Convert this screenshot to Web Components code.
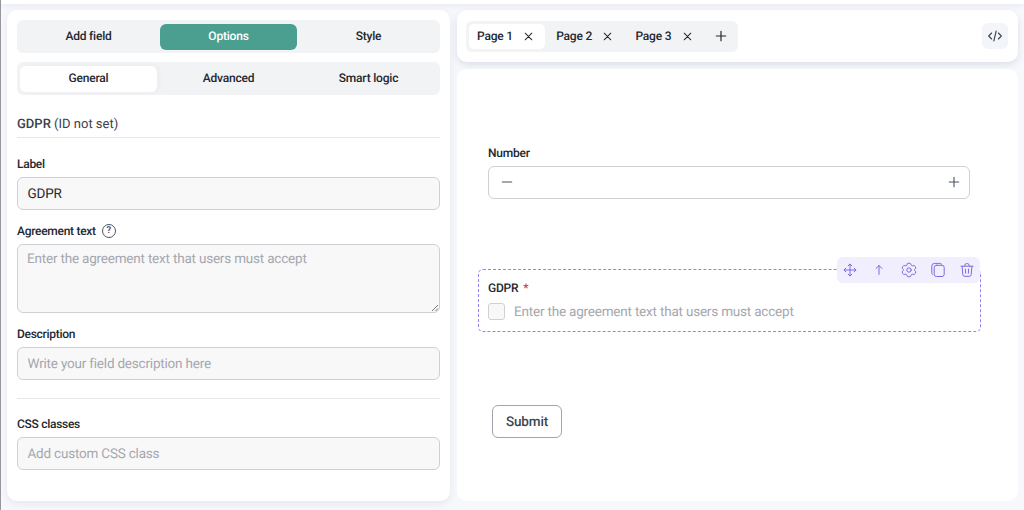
<!DOCTYPE html>
<html lang="en">
<head>
<meta charset="utf-8">
<title>Form builder</title>
<style>
html, body {
    margin:0;
    height:100%;
    overflow:hidden;
}
body {
    font-family:Roboto, sans-serif;
    font-size:12px;
    letter-spacing:-.2px;
    color:#23282f;
    text-rendering:geometricPrecision;
}
</style>
</head>
<body>
<form-builder></form-builder>
<script>
const icons = {
    close: '<path d="M4.5 4.5l7 7M11.5 4.5l-7 7"/>',
    plus: '<path d="M8 3.3v9.4M3.3 8h9.4"/>',
    minus: '<path d="M3.3 8h9.4"/>',
    code: '<path d="M4.6 5L1.7 8l2.9 3M11.4 5l2.9 3-2.9 3M9.2 3L6.8 13"/>',
    move: '<path d="M8 2.2v11.6M2.2 8h11.6M6.2 3.8L8 2l1.8 1.8M6.2 12.2L8 14l1.8-1.8M3.8 6.2L2 8l1.8 1.8M12.2 6.2L14 8l-1.8 1.8"/>',
    up: '<path d="M8 12.4V3.6M5 6.5l3-3 3 3"/>',
    gear: '<circle cx="8" cy="8" r="2.2"/><path d="M6.4 1.6Q8 .5 9.6 1.6L10.3 3.3Q11 3.8 11.4 3.8L13.2 3.5Q14.9 4.5 14.8 6.3L13.6 7.5V8.5L14.8 9.7Q14.9 11.5 13.2 12.5L11.4 12.2Q11 12.2 10.3 12.7L9.6 14.4Q8 15.5 6.4 14.4L5.7 12.7Q5 12.2 4.6 12.2L2.8 12.5Q1.1 11.5 1.2 9.7L2.4 8.5V7.5L1.2 6.3Q1.1 4.5 2.8 3.5L4.6 3.8Q5 3.8 5.7 3.3Z"/>',
    copy: '<rect x="4.2" y="3.3" width="10" height="11.2" rx="2.2"/><path d="M2.3 12.4Q1.8 11.8 1.8 10.8V4.1Q1.8 1.4 4.5 1.4h5.2q1.3 0 2 .9"/>',
    trash: '<path d="M2 4.2h12M5.5 4.1L6.4 2Q6.7 1.6 7.2 1.6h1.6q.5 0 .8.4l.9 2.1M3.1 4.5l.7 8.2q.2 1.6 1.7 1.6h5q1.5 0 1.7-1.6l.7-8.2M6.4 7.2l.2 4M9.6 7.2l-.2 4"/>'
}

class UiIcon extends HTMLElement {
    connectedCallback() {
        const shadow = this.attachShadow({ mode: 'open' })
        shadow.innerHTML = `
        <style>
        :host {
            display:block;
            flex:none;
            width:16px;
            height:16px;
        }
        svg {
            display:block;
            width:100%;
            height:100%;
            fill:none;
            stroke:currentColor;
            stroke-width:var(--stroke, 1.1);
            stroke-linecap:round;
            stroke-linejoin:round;
        }
        </style>
        <svg viewBox="0 0 16 16">${icons[this.getAttribute('name')]}</svg>
        `
    }
}

class SegmentTabs extends HTMLElement {
    connectedCallback() {
        const shadow = this.attachShadow({ mode: 'open' })
        shadow.innerHTML = `
        <style>
        :host {
            display:grid;
            grid-template-columns:repeat(3, 1fr);
            gap:3px;
            box-sizing:border-box;
            height:33px;
            padding:3.5px 3px 3px;
            border-radius:6px;
            background:#f2f3f5;
        }
        ::slotted(button) {
            border:none;
            padding:0 0 1px;
            border-radius:6px;
            background:none;
            font:500 12px Roboto, sans-serif;
            letter-spacing:-.2px;
            text-rendering:geometricPrecision;
            color:#23282f;
        }
        ::slotted(button.active) {
            background:#fff;
            box-shadow:2px 0 6px rgba(30,40,70,.04);
        }
        :host([primary]) ::slotted(button.active) {
            background:#4a9f91;
            color:#fff;
            box-shadow:none;
        }
        </style>
        <slot></slot>
        `
    }
}

class OptionField extends HTMLElement {
    connectedCallback() {
        const shadow = this.attachShadow({ mode: 'open' })
        shadow.innerHTML = `
        <style>
        :host {
            display:block;
        }
        label {
            display:flex;
            align-items:center;
            gap:6px;
            height:14px;
            margin-bottom:6px;
            font-weight:500;
            line-height:14px;
            letter-spacing:-.28px;
        }
        .help {
            display:grid;
            place-items:center;
            box-sizing:border-box;
            width:14px;
            height:14px;
            border:1px solid #4b5262;
            border-radius:50%;
            font-size:9.5px;
            line-height:12px;
            letter-spacing:0;
            color:#3c4352;
        }
        .box {
            position:relative;
            box-sizing:border-box;
            height:33px;
            padding:0 9.5px;
            border:1px solid #ced0d6;
            border-radius:6px;
            background:#f8f8f9;
            font-size:13.5px;
            line-height:32px;
            letter-spacing:-.2px;
            color:#a5a7ae;
        }
        :host([filled]) .box {
            color:#23282f;
        }
        :host([multiline]) .box {
            height:69px;
            padding:6px 9px;
            line-height:16px;
        }
        .grip {
            position:absolute;
            right:0;
            bottom:0;
            width:8px;
            height:8px;
            stroke:#777;
            stroke-width:1;
        }
        </style>
        <label>${this.getAttribute('label')}${this.hasAttribute('help') ? '<span class="help">?</span>' : ''}</label>
        <div class="box">
            <slot></slot>
            ${this.hasAttribute('multiline') ? '<svg class="grip" viewBox="0 0 8 8"><path d="M1 7L7 1M4.5 7L7 4.5"/></svg>' : ''}
        </div>
        `
    }
}

class OptionsPanel extends HTMLElement {
    connectedCallback() {
        const shadow = this.attachShadow({ mode: 'open' })
        shadow.innerHTML = `
        <style>
        :host {
            display:block;
            box-sizing:border-box;
            padding:10px 10px 0;
            border-radius:10px;
            background:#fff;
            box-shadow:0 3px 8px rgba(40,50,90,.08);
        }
        segment-tabs + segment-tabs {
            margin-top:9px;
        }
        h2 {
            margin:21px 0 0;
            padding-bottom:4px;
            border-bottom:1px solid #e6e7ea;
            font-size:13px;
            line-height:17px;
            font-weight:400;
            letter-spacing:0;
            color:#3c4148;
        }
        h2 b {
            font-weight:500;
        }
        option-field {
            margin-top:14px;
        }
        .first {
            margin-top:19px;
        }
        .first + option-field {
            margin-top:13.5px;
        }
        hr {
            height:1px;
            margin:18px 0;
            border:none;
            background:#e6e7ea;
        }
        hr + option-field {
            margin-top:0;
        }
        </style>
        <segment-tabs primary>
            <button>Add field</button>
            <button class="active">Options</button>
            <button>Style</button>
        </segment-tabs>
        <segment-tabs>
            <button class="active">General</button>
            <button>Advanced</button>
            <button>Smart logic</button>
        </segment-tabs>
        <h2><b>GDPR</b> (ID not set)</h2>
        <option-field class="first" label="Label" filled>GDPR</option-field>
        <option-field label="Agreement text" help multiline>Enter the agreement text that users must accept</option-field>
        <option-field label="Description">Write your field description here</option-field>
        <hr>
        <option-field label="CSS classes">Add custom CSS class</option-field>
        `
    }
}

class PageBar extends HTMLElement {
    connectedCallback() {
        const shadow = this.attachShadow({ mode: 'open' })
        const pages = ['Page 1', 'Page 2', 'Page 3']
        shadow.innerHTML = `
        <style>
        :host {
            display:flex;
            align-items:center;
            justify-content:space-between;
            box-sizing:border-box;
            height:52px;
            padding:0 10px 0 9px;
            border-radius:10px;
            background:#fff;
            box-shadow:0 3px 7px rgba(40,50,90,.12);
        }
        nav {
            display:flex;
            align-items:center;
            gap:3px;
            box-sizing:border-box;
            height:31px;
            width:272px;
            padding:0 3px;
            border-radius:6px;
            background:#f2f3f5;
        }
        .page {
            display:flex;
            align-items:center;
            justify-content:space-between;
            box-sizing:border-box;
            width:76.2px;
            height:25px;
            padding:0 9px 0 8px;
            border-radius:5px;
            font-weight:500;
        }
        .page.active {
            background:#fff;
        }
        .page ui-icon {
            width:15px;
            height:15px;
        }
        .add {
            margin-left:6.6px;
            --stroke:1.2;
        }
        .code {
            display:grid;
            place-items:center;
            width:26px;
            height:26px;
            border-radius:6px;
            background:#f4f5f9;
            color:#3c4352;
        }
        </style>
        <nav>
            ${pages.map((page, i) => `<div class="page ${i === 0 ? 'active' : ''}"><span>${page}</span><ui-icon name="close"></ui-icon></div>`).join('')}
            <ui-icon class="add" name="plus"></ui-icon>
        </nav>
        <div class="code"><ui-icon name="code"></ui-icon></div>
        `
    }
}

class FieldToolbar extends HTMLElement {
    connectedCallback() {
        const shadow = this.attachShadow({ mode: 'open' })
        shadow.innerHTML = `
        <style>
        :host {
            display:flex;
            align-items:center;
            justify-content:space-between;
            box-sizing:border-box;
            width:143px;
            height:26px;
            padding:0 5px;
            border-radius:6px;
            background:#f1effd;
            color:#7c6be0;
            --stroke:1;
        }
        </style>
        <ui-icon name="move"></ui-icon>
        <ui-icon name="up"></ui-icon>
        <ui-icon name="gear"></ui-icon>
        <ui-icon name="copy"></ui-icon>
        <ui-icon name="trash"></ui-icon>
        `
    }
}

class FormCanvas extends HTMLElement {
    connectedCallback() {
        const shadow = this.attachShadow({ mode: 'open' })
        shadow.innerHTML = `
        <style>
        :host {
            display:block;
            box-sizing:border-box;
            padding:77px 37px 0 21px;
            border-radius:10px;
            background:#fff;
        }
        .title {
            font-weight:500;
            line-height:14px;
        }
        .number {
            margin:0 11px 0 10px;
        }
        .stepper {
            display:flex;
            align-items:center;
            justify-content:space-between;
            box-sizing:border-box;
            height:33px;
            margin-top:6px;
            padding:0 7px 1px 10px;
            border:1px solid #ced0d6;
            border-radius:6px;
            color:#4b5262;
        }
        .selected {
            position:relative;
            box-sizing:border-box;
            height:63px;
            margin-top:70px;
            padding:11px 10px 0 9px;
            border:1px dashed #9384ef;
            border-radius:5px;
        }
        .selected field-toolbar {
            position:absolute;
            top:-13px;
            right:0;
        }
        .title i {
            margin-left:2px;
            font-style:normal;
            color:#cf3a35;
        }
        .agree {
            display:flex;
            align-items:center;
            gap:9px;
            height:17px;
            margin-top:8px;
            font-size:13.5px;
            line-height:18px;
            color:#a5a7ae;
        }
        .check {
            box-sizing:border-box;
            width:17px;
            height:17px;
            border:1px solid #ced0d6;
            border-radius:3px;
            background:#f8f8f9;
        }
        button {
            display:block;
            box-sizing:border-box;
            width:70px;
            height:33px;
            margin:73px 0 0 14px;
            padding:0;
            border:1px solid #a0a4ae;
            border-radius:6px;
            background:#fff;
            font:500 13.5px Roboto, sans-serif;
            letter-spacing:-.15px;
            text-rendering:geometricPrecision;
            color:#3c4656;
        }
        </style>
        <div class="number">
            <div class="title">Number</div>
            <div class="stepper">
                <ui-icon name="minus"></ui-icon>
                <ui-icon name="plus"></ui-icon>
            </div>
        </div>
        <div class="selected">
            <field-toolbar></field-toolbar>
            <div class="title">GDPR <i>*</i></div>
            <div class="agree"><span class="check"></span><span>Enter the agreement text that users must accept</span></div>
        </div>
        <button>Submit</button>
        `
    }
}

class FormBuilder extends HTMLElement {
    connectedCallback() {
        const shadow = this.attachShadow({ mode: 'open' })
        shadow.innerHTML = `
        <style>
        :host {
            display:flex;
            flex-direction:column;
            box-sizing:border-box;
            height:510px;
            border-left:1px solid #97979d;
            background:#f7f8fc;
        }
        header {
            flex:none;
            height:4px;
            background:#fff;
            box-shadow:0 1px 6px rgba(30,40,70,.1);
        }
        main {
            display:grid;
            grid-template-columns:443px 561px;
            gap:7px;
            flex:1;
            padding:6px 6px 9px;
        }
        section {
            display:grid;
            grid-template-rows:52px 1fr;
            gap:7px;
        }
        </style>
        <header></header>
        <main>
            <options-panel></options-panel>
            <section>
                <page-bar></page-bar>
                <form-canvas></form-canvas>
            </section>
        </main>
        `
    }
}

customElements.define('ui-icon', UiIcon)
customElements.define('segment-tabs', SegmentTabs)
customElements.define('option-field', OptionField)
customElements.define('options-panel', OptionsPanel)
customElements.define('page-bar', PageBar)
customElements.define('field-toolbar', FieldToolbar)
customElements.define('form-canvas', FormCanvas)
customElements.define('form-builder', FormBuilder)
</script>
</body>
</html>
